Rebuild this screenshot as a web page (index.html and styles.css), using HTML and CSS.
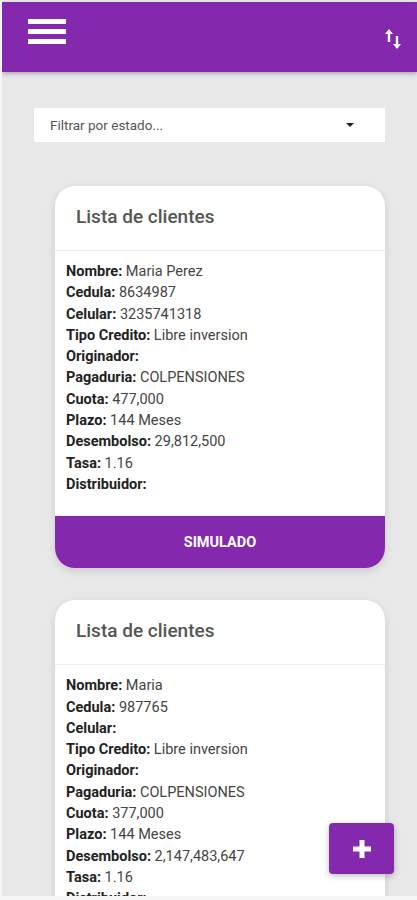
FILE: index.html
```html
<!DOCTYPE html>
<html lang="es">
<head>
    <meta charset="UTF-8">
    <meta name="viewport" content="width=device-width, initial-scale=1.0">
    <title>Lista de clientes</title>
    <link rel="stylesheet" href="styles.css">
</head>
<body>
<div class="screen">

    <!-- Header -->
    <header class="topbar">
        <button class="menu-btn" aria-label="Menu">
            <span></span><span></span><span></span>
        </button>
        <button class="sort-btn" aria-label="Ordenar">
            <svg width="18" height="22" viewBox="0 0 18 22">
                <path d="M5 1 L1 6 H3.8 V14 H6.2 V6 H9 Z" fill="#fff"/>
                <path d="M13 21 L9 16 H11.8 V8 H14.2 V16 H17 Z" fill="#fff"/>
            </svg>
        </button>
    </header>

    <main class="content">
        <!-- Filter -->
        <div class="filter">
            <span>Filtrar por estado...</span>
            <span class="caret"></span>
        </div>

        <!-- Card 1 -->
        <section class="card">
            <h2 class="card-title">Lista de clientes</h2>
            <div class="card-body">
                <p><b>Nombre:</b> Maria Perez</p>
                <p><b>Cedula:</b> 8634987</p>
                <p><b>Celular:</b> 3235741318</p>
                <p><b>Tipo Credito:</b> Libre inversion</p>
                <p><b>Originador:</b></p>
                <p><b>Pagaduria:</b> COLPENSIONES</p>
                <p><b>Cuota:</b> 477,000</p>
                <p><b>Plazo:</b> 144 Meses</p>
                <p><b>Desembolso:</b> 29,812,500</p>
                <p><b>Tasa:</b> 1.16</p>
                <p><b>Distribuidor:</b></p>
            </div>
            <button class="card-action">Simulado</button>
        </section>

        <!-- Card 2 -->
        <section class="card">
            <h2 class="card-title">Lista de clientes</h2>
            <div class="card-body">
                <p><b>Nombre:</b> Maria</p>
                <p><b>Cedula:</b> 987765</p>
                <p><b>Celular:</b></p>
                <p><b>Tipo Credito:</b> Libre inversion</p>
                <p><b>Originador:</b></p>
                <p><b>Pagaduria:</b> COLPENSIONES</p>
                <p><b>Cuota:</b> 377,000</p>
                <p><b>Plazo:</b> 144 Meses</p>
                <p><b>Desembolso:</b> 2,147,483,647</p>
                <p><b>Tasa:</b> 1.16</p>
                <p><b>Distribuidor:</b></p>
            </div>
            <button class="card-action">Simulado</button>
        </section>
    </main>

    <!-- Floating add button -->
    <button class="fab" aria-label="Agregar">
        <svg width="22" height="22" viewBox="0 0 22 22">
            <path d="M8.5 2 H13.5 V8.5 H20 V13.5 H13.5 V20 H8.5 V13.5 H2 V8.5 H8.5 Z" fill="#fff"/>
        </svg>
    </button>
</div>
</body>
</html>
```

FILE: styles.css
```css
html, body {
    margin: 0;
    padding: 0;
    background: #f6f6f6;
}

body {
    font-family: Roboto, "Liberation Sans", Arial, sans-serif;
}

.screen {
    position: relative;
    height: 896px;
    margin-left: 2px;
    overflow: hidden;
    background: #e8e8e8;
}

.topbar {
    height: 70px;
    margin-top: 2px;
    background-color: #8429ad;
    box-shadow: 0 2px 4px rgba(0, 0, 0, 0.25);
    display: flex;
    justify-content: space-between;
    align-items: flex-start;
    padding: 0 15px 0 26px;
}

.topbar button {
    border: none;
    background: none;
    padding: 0;
    cursor: pointer;
}

.menu-btn {
    margin-top: 17px;
    width: 38px;
    display: flex;
    flex-direction: column;
    gap: 5px;
}

.menu-btn span {
    display: block;
    height: 5px;
    background: #fff;
}

.sort-btn {
    margin-top: 26px;
}

.content {
    padding: 36px 32px 0 32px;
    display: flex;
    flex-direction: column;
}

.filter {
    height: 34px;
    background: #fff;
    display: flex;
    justify-content: space-between;
    align-items: center;
    padding: 0 31px 0 16px;
    font-size: 13.5px;
    color: #555;
    margin-bottom: 44px;
}

.caret {
    width: 0;
    height: 0;
    border-left: 4px solid transparent;
    border-right: 4px solid transparent;
    border-top: 4px solid #222;
}

.card {
    background: #fff;
    border-radius: 20px;
    margin: 0 0 32px 21px;
    box-shadow: 0 3px 8px rgba(0, 0, 0, 0.12);
    overflow: hidden;
}

.card-title {
    margin: 0;
    padding: 19px 21px 21px;
    font-size: 19px;
    font-weight: 500;
    color: #555;
    line-height: 24px;
    border-bottom: 1px solid #ededed;
}

.card-body {
    padding: 10px 11px 21px;
}

.card-body p {
    margin: 0;
    font-size: 14.5px;
    line-height: 21.3px;
    color: #444;
}

.card-body b {
    color: #222;
    font-weight: 700;
}

.card-action {
    display: block;
    width: 100%;
    height: 52px;
    border: none;
    background-color: #8429ad;
    color: #fff;
    font-family: inherit;
    font-size: 14.5px;
    font-weight: 700;
    text-transform: uppercase;
    cursor: pointer;
}

.fab {
    position: absolute;
    left: 327px;
    top: 823px;
    width: 65px;
    height: 51px;
    border: none;
    border-radius: 4px;
    background-color: #8429ad;
    box-shadow: 0 2px 6px rgba(0, 0, 0, 0.25);
    display: flex;
    align-items: center;
    justify-content: center;
    cursor: pointer;
}
```
